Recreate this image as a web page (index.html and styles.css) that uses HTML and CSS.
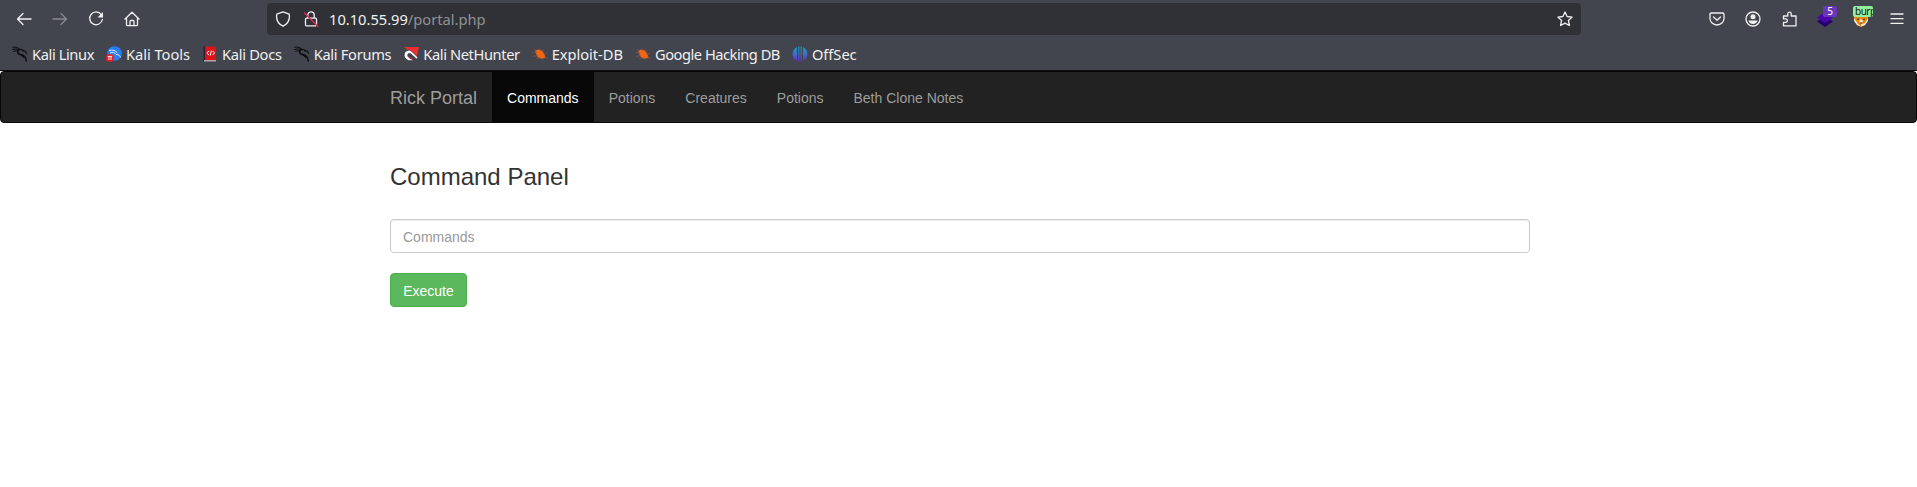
FILE: index.html
```html
<!DOCTYPE html>
<html lang="en">
<head>
<meta charset="utf-8">
<title>Rick Portal</title>
<link rel="stylesheet" href="styles.css">
</head>
<body>
<svg class="defs" width="0" height="0">
  <defs>
    <linearGradient id="off" gradientUnits="userSpaceOnUse" x1="0" y1="0" x2="0" y2="16"><stop offset="0" stop-color="#1b9bb5"/><stop offset=".5" stop-color="#3b6fc9"/><stop offset="1" stop-color="#6a25c9"/></linearGradient>
    <symbol id="dragon" viewBox="0 0 16 16"><path d="M.3 1.200C3.500.8 6.500 1.600 8.800 3.800M.3 3.600c2.800-.9 5-.7 7 .1M1.300 5.600c1.800-.8 3.200-1 4.700-.8" fill="none" stroke="#0b0b0d" stroke-width="1"/><path d="M6.500 4C4.800 6.200 5.600 8 8.500 8.500c3.800.6 5.700 2 5.800 7" fill="none" stroke="#0b0b0d" stroke-width="1.500"/><path d="M7 3.600c3-.6 5.500.6 8 4.200M10 4.800l4.200.4M9 8.700l3.500 3.300" fill="none" stroke="#0b0b0d" stroke-width="1.100"/></symbol>
    <symbol id="bug" viewBox="0 0 16 16"><path d="M3.300 5.200C5.500 3 9 3.500 11 6l1.800 3.200L13.500 12l-2.300.3C8 13.500 5.700 11.500 4.700 9z" fill="#f26516"/><path d="M2 3l3 3M.3 6.500l5 .3M1 10.500l5-1M4 13l4-2M8 5L6.500 2.200M10.500 6l.8-3M11.500 8.500l4-1.500M12 11l3.500 1.500M9.500 12l2 1.800" fill="none" stroke="#a5583a" stroke-width=".6"/></symbol>
  </defs>
</svg>
<header class="chrome">
  <div class="toolbar">
    <div class="nav-buttons">
      <svg class="ic" viewBox="0 0 16 16"><path d="M15 8H1.500M7 2.500L1.500 8 7 13.500"/></svg>
      <svg class="ic dim" viewBox="0 0 16 16"><path d="M1 8h13.500M9 2.500L14.500 8 9 13.500"/></svg>
      <svg class="ic" viewBox="0 0 16 16"><path d="M13.300 3.600A6.400 6.400 0 1 0 14.400 8.500"/><path class="fill" d="M15 1v5.500H9.500z"/></svg>
      <svg class="ic" viewBox="0 0 16 16"><path d="M1 8l7-6.700L15 8M2.500 7v6.700q0 1 1 1h9q1 0 1-1V7M6 14.500v-4q0-1 1-1h2q1 0 1 1v4"/></svg>
    </div>
    <div class="urlbar">
      <svg class="ic shield" viewBox="0 0 16 16"><path d="M8 .9l6.200 2.200c.9 5-1.200 9.500-6.200 12.100C3 12.600.9 8.100 1.800 3.100z"/></svg>
      <svg class="ic lock" viewBox="0 0 16 16"><path d="M4.800 7V4a3.200 3.200 0 0 1 6.400 0v3M3.500 7.200h9q1 0 1 1v5.600q0 1-1 1h-9q-1 0-1-1V8.200q0-1 1-1z"/><path class="slash" d="M1.500 2L15 15.500"/></svg>
      <span class="url">10.10.55.99<span class="path">/portal.php</span></span>
      <svg class="ic star" viewBox="0 0 16 16"><path d="M8 1l2.100 4.500 5 .6-3.700 3.400 1 5L8 12.100l-4.400 2.400 1-5L.9 6.100l5-.6z"/></svg>
    </div>
    <div class="tools">
      <svg class="ic" viewBox="0 0 16 16"><path d="M2.300 2h11.400q1.300 0 1.300 1.300v4.200a7 6.500 0 0 1-14 0V3.300Q1 2 2.300 2zM4.500 6L8 9.300 11.500 6"/></svg>
      <svg class="ic" viewBox="0 0 16 16"><circle cx="8" cy="8" r="7"/><circle class="fill" cx="8" cy="5.700" r="2.500"/><path class="fill" d="M3.500 9.500h9c-.4 2-2 3.500-4.500 3.500s-4.100-1.500-4.500-3.500z"/></svg>
      <svg class="ic" viewBox="0 0 16 16"><path d="M2.500 14.800V11.300h2.200a1.700 1.700 0 0 0 0-3.400H2.500V5h4.300V2.800a1.700 1.700 0 0 1 3.400 0V5h4.800v9.800z"/></svg>
      <span class="ext">
        <svg class="pic" viewBox="0 0 16 16"><path d="M0 10.500L8 5l8 5.500L8 16z" fill="#25006e"/><path d="M0 6.500L8 1l8 5.500L8 12z" fill="#4a05ad"/></svg>
        <span class="badge five">5</span>
      </span>
      <span class="ext">
        <svg class="pic" viewBox="0 0 16 16"><path d="M1 4l14 0 0 5-3 5-4 2-4-2-3-5z" fill="#e8860c"/><path d="M1 7l4 6 3 2.500L4 14 1 10zM15 7l-3 5-4 1.500 0 2 4-1.500 3-4zM6 10l2-2 2 2-2 3z" fill="#f3eee2"/><path d="M4 8.200h2M10 8.200h2M7 12h2" stroke="#3c2a12"/></svg>
        <span class="badge burp">burp</span>
      </span>
      <svg class="ic" viewBox="0 0 16 16"><path d="M2 3h12M2 7.700h12M2 12.400h12"/></svg>
    </div>
  </div>
  <nav class="bookmarks">
    <a class="tight"><svg class="pic"><use href="#dragon"/></svg>Kali Linux</a>
    <a><svg class="pic" viewBox="0 0 16 16"><circle cx="8.500" cy="7.500" r="7.300" fill="#2a7df0"/><path d="M3 4.500c4-1 6.500 0 8.500 2.500M4 7c3-1 5-.5 6 1.500 3 0 4 1 4.500 3" fill="none" stroke="#dcecff"/><circle cx="3.800" cy="12" r="3.900" fill="#e31b23"/><path d="M1.700 10.400h4.500M2.900 10.400V14M5 10.400V14" fill="none" stroke="#fff" stroke-width=".9"/></svg>Kali Tools</a>
    <a class="snug"><svg class="pic" viewBox="0 0 16 16"><path d="M1.500.5h2v15h-2z" fill="#1e2448"/><path d="M3.200.5h10.800v13.500H3.200z" fill="#df1219"/><path d="M2 14h12v1.500H2z" fill="#b9a5a8"/><path d="M6.800 5L5 7l1.800 2M10.700 5l1.800 2-1.800 2M9.300 4.500l-1 5" fill="none" stroke="#fff"/></svg>Kali Docs</a>
    <a class="snug"><svg class="pic"><use href="#dragon"/></svg>Kali Forums</a>
    <a class="tight"><svg class="pic" viewBox="0 0 16 16"><path d="M1 1h15l-2.500 11L7 6z" fill="#f02b2f"/><path d="M13.500 13L7.800 7.800C5.500 6.500 4 8.500 5 10.500c1 1.700 3.500 2.500 6 3.500-4 1.500-8 .5-9.500-3C0 6.500 4 3 8 4.700L15 11.500z" fill="#fff" stroke="#202026" stroke-width=".6"/><path d="M5.500 10.500c1 1.500 2.500 2.200 4.500 2.500" fill="none" stroke="#d51b34"/></svg>Kali NetHunter</a>
    <a><svg class="pic"><use href="#bug"/></svg>Exploit-DB</a>
    <a class="tightest"><svg class="pic"><use href="#bug"/></svg>Google Hacking DB</a>
    <a><svg class="pic" viewBox="0 0 16 16"><path d="M5 1v14A7.800 7.800 0 0 1 5 1zM11 1v14a7.800 7.800 0 0 0 0-14zM6.200.5h1.200v15H6.200zM8.600.5h1.200v15H8.600z" fill="url(#off)"/></svg>OffSec</a>
  </nav>
</header>
<nav class="navbar">
  <div class="container">
    <a class="brand">Rick Portal</a>
    <ul class="menu">
      <li class="active">Commands</li>
      <li>Potions</li>
      <li>Creatures</li>
      <li>Potions</li>
      <li>Beth Clone Notes</li>
    </ul>
  </div>
</nav>
<main class="panel">
  <h3>Command Panel</h3>
  <input class="field" type="text" placeholder="Commands">
  <button class="execute" type="button">Execute</button>
</main>
</body>
</html>
```
FILE: styles.css
```css
* { box-sizing: border-box; }
body { margin: 0; background: #fff; color: #333; font: 14px/20px "Liberation Sans", Arial, sans-serif; overflow: hidden; }
.defs { position: absolute; }
.chrome { height: 71px; background: #42454d; border-bottom: 1px solid #0c0c0d; font-family: "Noto Sans", sans-serif; color: #f0f0f1; }
.toolbar { display: flex; align-items: center; height: 38px; }
.ic { display: block; flex: none; width: 16px; height: 16px; fill: none; stroke: #f0f0f1; stroke-width: 1.3; stroke-linejoin: round; stroke-linecap: round; }
.ic .fill { fill: #f0f0f1; stroke: none; }
.ic .slash { stroke: #e22850; }
.dim { opacity: .4; }
.pic { display: block; flex: none; width: 16px; height: 16px; }
.nav-buttons { display: flex; gap: 20px; width: 267px; padding-left: 16px; }
.urlbar { display: flex; align-items: center; width: 1314px; height: 32px; padding: 0 8px; border-radius: 4px; background: #303136; }
.lock { margin-left: 12px; }
.url { margin-left: 10px; font-size: 14.67px; white-space: nowrap; }
.path { color: #919297; }
.star { margin-left: auto; }
.tools { display: flex; gap: 20px; margin-left: 128px; }
.ext { position: relative; }
.badge { position: absolute; top: -5px; height: 11px; border-radius: 2px; font-size: 10px; line-height: 11px; }
.five { left: 6px; width: 14px; background: #6b36bb; color: #fff; text-align: center; }
.burp { left: 0; width: 20px; padding-left: 2px; overflow: hidden; background: #93ee9e; color: #142016; letter-spacing: -.5px; }
.bookmarks { display: flex; align-items: center; height: 32px; padding-left: 12px; gap: 12px; font-size: 14.67px; line-height: 20px; }
.bookmarks a { display: flex; align-items: center; gap: 4px; white-space: nowrap; letter-spacing: -.03px; }
.bookmarks .snug { letter-spacing: -.3px; }
.bookmarks .tight { letter-spacing: -.4px; }
.bookmarks .tightest { letter-spacing: -.48px; }
.navbar { height: 52px; background: #222; border: 1px solid #080808; border-radius: 4px; }
.container { display: flex; padding-left: 389px; }
.brand { padding: 16px 15px 14px 0; font-size: 18px; color: #9d9d9d; }
.menu { display: flex; margin: 0; padding: 0; list-style: none; color: #9d9d9d; }
.menu li { padding: 16px 15px 14px; }
.menu .active { background: #080808; color: #fff; }
.panel { width: 1530px; padding: 41px 0 0 390px; }
.panel h3 { margin: 0 0 29px; font-size: 24px; font-weight: 500; line-height: 26px; }
.field { display: block; width: 100%; height: 34px; padding: 7px 12px 5px; border: 1px solid #ccc; border-radius: 4px; box-shadow: inset 0 1px 1px rgba(0,0,0,.075); font: inherit; }
.field::placeholder { color: #999; opacity: 1; }
.execute { display: block; width: 77px; height: 34px; margin-top: 20px; padding: 7px 12px 5px; border: 1px solid #4cae4c; border-radius: 4px; background: #5cb85c; color: #fff; font: inherit; }
```
